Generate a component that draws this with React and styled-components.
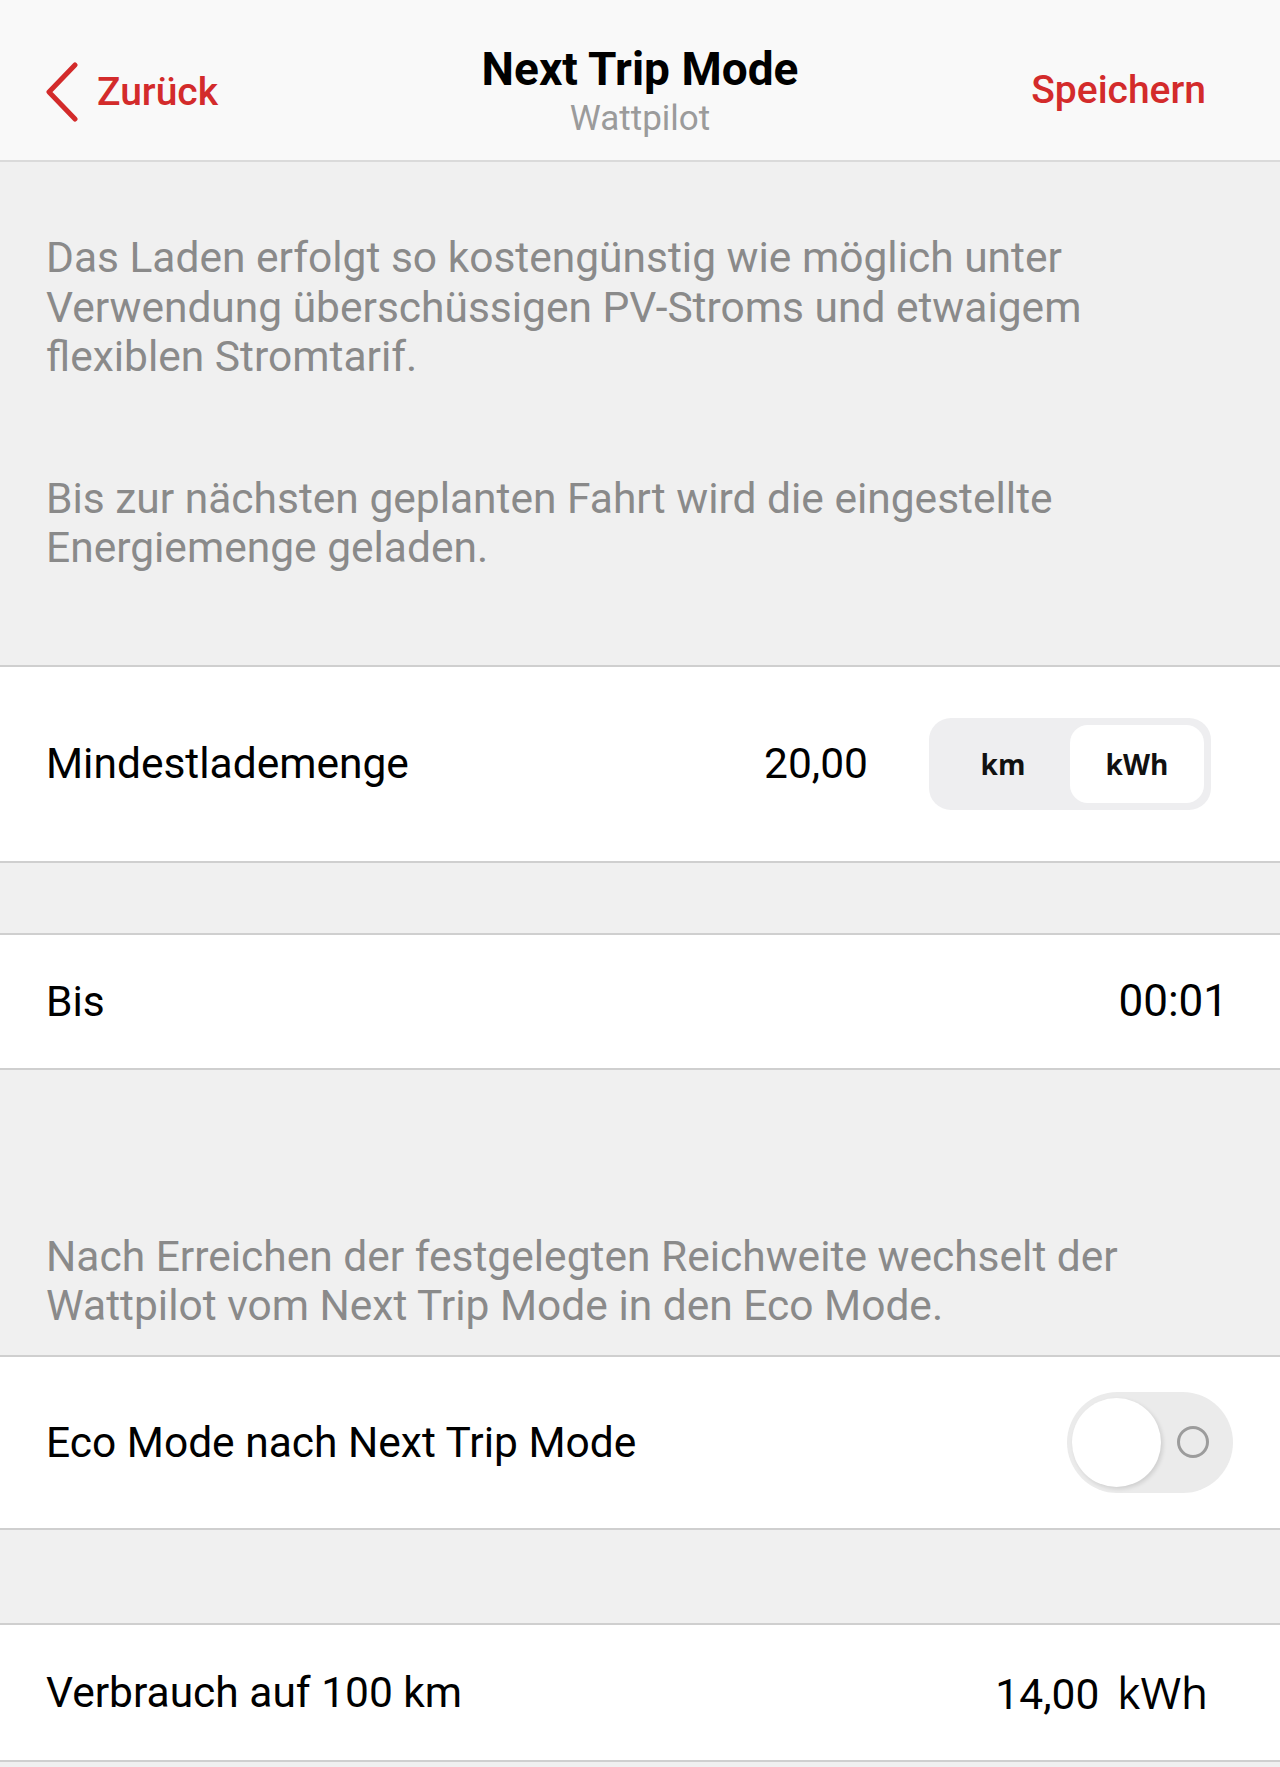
import React from 'react';
import styled, { createGlobalStyle } from 'styled-components';

const Global = createGlobalStyle`
	body {
		margin: 0;
		background: #f0f0f0;
		font-family: Roboto, "Liberation Sans", sans-serif;
	}
	* {
		box-sizing: border-box;
	}
`;

const RED = '#d32b2b';

const Page = styled.div`
	width: 1280px;
	min-height: 1767px;
	background: #f0f0f0;
`;

const Header = styled.header`
	height: 162px;
	background: #f9f9f9;
	border-bottom: 2px solid #dadada;
	display: grid;
	grid-template-columns: 1fr auto 1fr;
	align-items: start;
	padding: 0 45px;
`;

const Back = styled.div`
	display: flex;
	align-items: center;
	gap: 18px;
	margin-top: 62px;
	color: ${ RED };
	font-size: 39px;
	font-weight: 500;
	svg {
		display: block;
	}
`;

const TitleBlock = styled.div`
	display: flex;
	flex-direction: column;
	align-items: center;
	margin-top: 44px;
`;

const Title = styled.div`
	font-size: 46px;
	font-weight: 700;
	color: #000;
	line-height: 50px;
`;

const Subtitle = styled.div`
	font-size: 35px;
	color: #9b9b9b;
	line-height: 44px;
	margin-top: 3px;
`;

const Save = styled.div`
	justify-self: end;
	margin: 67px 29px 0 0;
	color: ${ RED };
	font-size: 39px;
	line-height: 46px;
	font-weight: 500;
`;

const Note = styled.div`
	padding: ${ ( p ) => p.$pad };
	color: #8a8a8a;
	font-size: 42.5px;
	line-height: 49.5px;
	p {
		margin: 0;
	}
	p + p {
		margin-top: 92px;
	}
`;

const Gap = styled.div`
	height: ${ ( p ) => p.$h }px;
`;

const Row = styled.div`
	height: ${ ( p ) => p.$h }px;
	background: #fff;
	border-top: 2px solid #cfcfcf;
	border-bottom: 2px solid #cfcfcf;
	display: flex;
	align-items: center;
	padding: 0 ${ ( p ) => p.$right }px 0 46px;
	font-size: 42.5px;
	color: #000;
`;

const Label = styled.div`
	flex: 1;
`;

const Value = styled.div`
	font-size: ${ ( p ) => p.$size || 42.5 }px;
	color: #000;
`;

const Segmented = styled.div`
	display: grid;
	grid-template-columns: 1fr 1fr;
	width: 282px;
	height: 92px;
	margin-left: 61px;
	padding: 7px;
	border-radius: 22px;
	background: #eeeef0;
`;

const Segment = styled.div`
	display: flex;
	align-items: center;
	justify-content: center;
	border-radius: 18px;
	background: ${ ( p ) => ( p.$active ? '#fff' : 'transparent' ) };
	font-family: "Open Sans", "Noto Sans", sans-serif;
	font-weight: 700;
	font-size: 28px;
	color: #111;
`;

const Toggle = styled.div`
	width: 166px;
	height: 101px;
	border-radius: 51px;
	background: #ebebeb;
	display: flex;
	align-items: center;
	padding: 0 5px;
`;

const Knob = styled.div`
	width: 89px;
	height: 89px;
	border-radius: 50%;
	background: #fff;
	box-shadow: 2px 2px 4px rgba( 0, 0, 0, 0.12 );
`;

const Ring = styled.div`
	width: 32px;
	height: 32px;
	border-radius: 50%;
	border: 3px solid #9c9c9c;
	margin-left: auto;
	margin-right: 19px;
`;

const Unit = styled.span`
	font-family: "Open Sans", "Noto Sans", sans-serif;
	font-size: 44px;
	margin-left: 18px;
`;

const Chevron = () => (
	<svg width="34" height="60" viewBox="0 0 34 60">
		<polyline points="30,3 4,30 30,57" fill="none" stroke={ RED } strokeWidth="5" strokeLinecap="round" strokeLinejoin="round" />
	</svg>
);

export default function App() {
	return (
		<Page>
			<Global />
			<Header>
				<Back>
					<Chevron />
					<span>Zurück</span>
				</Back>
				<TitleBlock>
					<Title>Next Trip Mode</Title>
					<Subtitle>Wattpilot</Subtitle>
				</TitleBlock>
				<Save>Speichern</Save>
			</Header>

			<Note $pad="71px 120px 92px 46px">
				<p>Das Laden erfolgt so kostengünstig wie möglich unter Verwendung überschüssigen PV-Stroms und etwaigem flexiblen Stromtarif.</p>
				<p>Bis zur nächsten geplanten Fahrt wird die eingestellte Energiemenge geladen.</p>
			</Note>

			<Row $h={ 198 } $right={ 69 }>
				<Label>Mindestlademenge</Label>
				<Value>20,00</Value>
				<Segmented>
					<Segment>km</Segment>
					<Segment $active>kWh</Segment>
				</Segmented>
			</Row>

			<Gap $h={ 70 } />

			<Row $h={ 137 } $right={ 52 }>
				<Label>Bis</Label>
				<Value $size={ 44 }>00:01</Value>
			</Row>

			<Note $pad="162px 100px 24px 46px">
				<p>Nach Erreichen der festgelegten Reichweite wechselt der Wattpilot vom Next Trip Mode in den Eco Mode.</p>
			</Note>

			<Row $h={ 175 } $right={ 47 }>
				<Label>Eco Mode nach Next Trip Mode</Label>
				<Toggle>
					<Knob />
					<Ring />
				</Toggle>
			</Row>

			<Gap $h={ 93 } />

			<Row $h={ 139 } $right={ 72 }>
				<Label>Verbrauch auf 100 km</Label>
				<Value>
					14,00
					<Unit>kWh</Unit>
				</Value>
			</Row>
		</Page>
	);
}
